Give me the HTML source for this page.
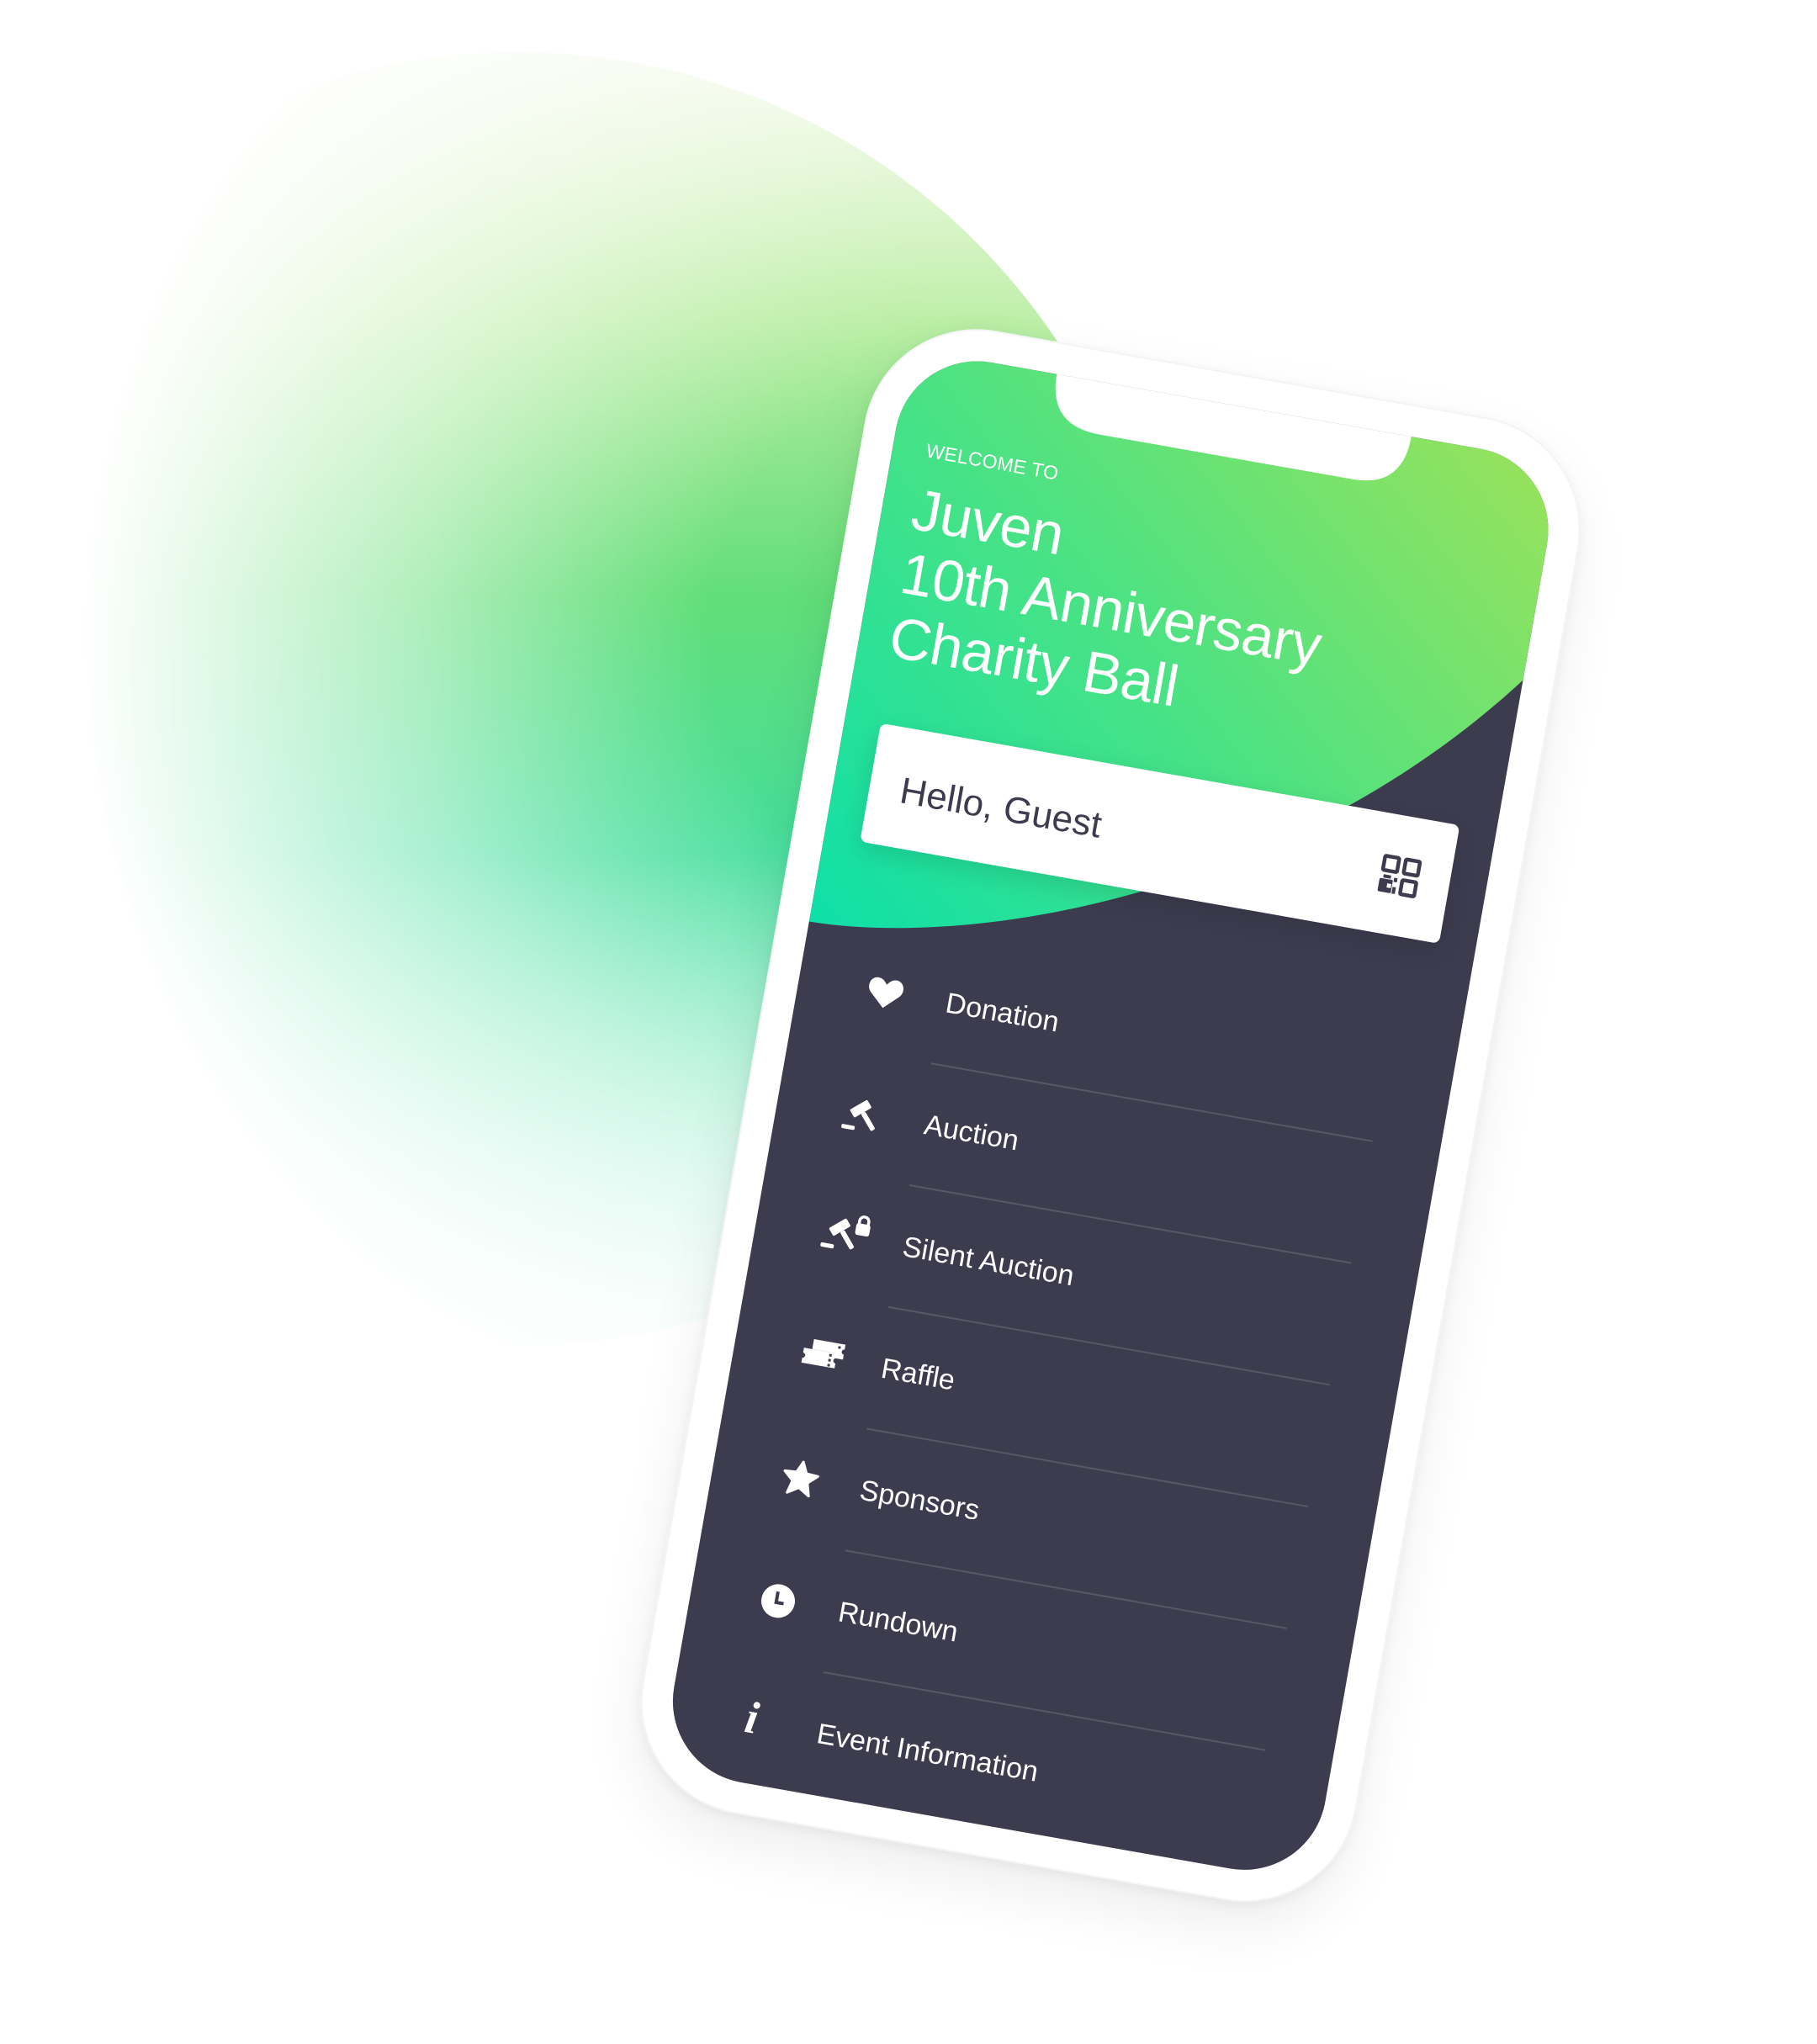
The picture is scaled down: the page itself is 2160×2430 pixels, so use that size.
<!DOCTYPE html>
<html><head><meta charset="utf-8">
<style>
html,body{margin:0;padding:0;background:#fff;}
body{width:2160px;height:2430px;overflow:hidden;position:relative;font-family:"Liberation Sans",sans-serif;}
.blob{position:absolute;left:-153px;top:62px;width:1538px;height:1538px;border-radius:50%;
background:
radial-gradient(circle at 85% 45%, rgba(255,255,255,0) 0%, rgba(255,255,255,0) 20%, rgba(255,255,255,0.5) 42%, #fff 68%),
linear-gradient(180deg,#eef8de 0%,#b8eda0 20%,#62de78 42%,#45de9c 62%,#b0f2da 85%,#e8fbf4 100%);}
.phone{position:absolute;left:1082px;top:414px;width:786px;height:1714px;transform-origin:0 0;transform:rotate(10deg);}
.frame{position:absolute;left:-38px;top:-38px;width:862px;height:1790px;border-radius:135px;background:#fff;
box-shadow:0 30px 70px rgba(0,0,0,0.07),0 4px 14px rgba(0,0,0,0.05), inset 0 0 0 2px #f4f4f4;}
.screen{position:absolute;left:0;top:0;width:786px;height:1714px;border-radius:98px;overflow:hidden;background:#3d3c4f;}
.screen svg.bg{position:absolute;left:0;top:0;}
.t{position:absolute;color:#fff;white-space:nowrap;}
.welcome{left:40px;top:102px;font-size:23px;line-height:28px;letter-spacing:0.3px;}
.title{left:36px;top:149px;font-size:69px;line-height:77px;letter-spacing:-0.5px;}
.card{position:absolute;left:43px;top:445px;width:699px;height:143px;background:#fff;border-radius:8px;box-shadow:0 10px 30px rgba(0,0,0,0.12);}
.hello{position:absolute;left:37px;top:50px;font-size:44px;line-height:50px;color:#3d3b4e;}
.qr{position:absolute;left:615px;top:48px;}
.item{position:absolute;left:177px;font-size:34px;line-height:40px;color:#fff;}
.div{position:absolute;left:172px;width:533px;height:2px;background:rgba(255,255,255,0.14);}
.ic{position:absolute;}
</style></head><body>
<div class="blob"></div>
<div class="phone">
  <div class="frame"></div>
  <div class="screen">
    <svg class="bg" width="786" height="1714" viewBox="0 0 786 1714">
      <defs>
        <linearGradient id="g" x1="0" y1="1" x2="1" y2="0">
          <stop offset="0" stop-color="#0ee0a8"/>
          <stop offset="0.5" stop-color="#4ce283"/>
          <stop offset="1" stop-color="#9ae25a"/>
        </linearGradient>
      </defs>
      <path d="M0,0 H786 V262 C560,560 200,690 0,692 Z" fill="url(#g)"/>
      <path d="M172,-10 L177,0 Q177,62 240,62 L545,62 Q605,62 605,0 L610,-10 Z" fill="#fff"/>
    </svg>
    <div class="t welcome">WELCOME TO</div>
    <div class="t title">Juven<br>10th Anniversary<br>Charity Ball</div>
    <div class="card">
      <div class="hello">Hello, Guest</div>
      <svg class="qr" width="48" height="48" viewBox="0 0 48 48">
        <g fill="none" stroke="#3d3b4e" stroke-width="4.5">
          <rect x="3" y="3" width="17" height="17" rx="1.5"/>
          <rect x="28" y="3" width="17" height="17" rx="1.5"/>
          <rect x="28" y="28" width="17" height="17" rx="1.5"/>
        </g>
        <g fill="#3d3b4e">
          <rect x="1" y="30" width="16" height="16" rx="1.5"/>
          <rect x="5" y="25" width="9" height="4"/>
          <rect x="18" y="27" width="4" height="5"/>
          <rect x="18" y="38" width="4" height="8"/>
        </g>
        <rect x="11" y="35" width="5" height="5" fill="#fff"/>
      </svg>
    </div>

    <svg class="ic" style="left:82px;top:740px" width="44" height="40" viewBox="0 0 44 40"><path d="M22 38 L5 22 C-2 15 2 3 11 3 C16 3 19 6 22 10 C25 6 28 3 33 3 C42 3 46 15 39 22 Z" fill="#fff"/></svg>
    <div class="item" style="top:739px">Donation</div>
    <div class="div" style="top:832px"></div>

    <svg class="ic" style="left:78px;top:886px" width="46" height="46" viewBox="0 0 46 46"><g fill="#fff"><g transform="rotate(-40 24 18)"><rect x="12" y="8" width="24" height="11" rx="1.5"/><rect x="21" y="19" width="6" height="24" rx="2"/></g><rect x="2" y="36" width="16" height="5" rx="2"/></g></svg>
    <div class="item" style="top:886px">Auction</div>
    <div class="div" style="top:979px"></div>

    <svg class="ic" style="left:78px;top:1025px" width="66" height="50" viewBox="0 0 66 50"><g fill="#fff"><g transform="rotate(-40 24 22)"><rect x="12" y="12" width="24" height="11" rx="1.5"/><rect x="21" y="23" width="6" height="24" rx="2"/></g><rect x="2" y="40" width="16" height="5" rx="2"/><rect x="40" y="10" width="17" height="14" rx="3"/><path d="M43 11 V7 A5.5 5.5 0 0 1 54 7 V11" fill="none" stroke="#fff" stroke-width="3.5"/></g></svg>
    <div class="item" style="top:1033px">Silent Auction</div>
    <div class="div" style="top:1126px"></div>

    <svg class="ic" style="left:80px;top:1178px" width="54" height="42" viewBox="0 0 54 42"><g fill="#fff"><path d="M12 2 H50 V8 A3 3 0 0 0 50 14 V20 H40 V14 H12 Z"/><path d="M2 14 H42 V20 A3 3 0 0 0 42 26 V32 H2 V26 A3 3 0 0 0 2 20 Z"/></g><g fill="#3d3c4f"><rect x="33" y="16" width="3" height="3"/><rect x="33" y="22" width="3" height="3"/><rect x="33" y="28" width="3" height="3"/><rect x="42" y="5" width="3" height="3"/></g></svg>
    <div class="item" style="top:1180px">Raffle</div>
    <div class="div" style="top:1273px"></div>

    <svg class="ic" style="left:82px;top:1324px" width="46" height="44" viewBox="0 0 46 44"><path d="M23 2 L29 15 L43 16 L32 26 L36 41 L23 33 L10 41 L14 26 L3 16 L17 15 Z" fill="#fff" stroke="#fff" stroke-width="3" stroke-linejoin="round"/></svg>
    <div class="item" style="top:1327px">Sponsors</div>
    <div class="div" style="top:1420px"></div>

    <svg class="ic" style="left:82px;top:1472px" width="44" height="44" viewBox="0 0 44 44"><circle cx="22" cy="22" r="20" fill="#fff"/><path d="M20 11 V24 H29" fill="none" stroke="#3d3c4f" stroke-width="4"/></svg>
    <div class="item" style="top:1474px">Rundown</div>
    <div class="div" style="top:1567px"></div>

    <div class="t" style="left:90px;top:1606px;font-family:'Liberation Serif',serif;font-style:italic;font-weight:bold;font-size:54px;line-height:60px;">i</div>
    <div class="item" style="top:1621px">Event Information</div>
  </div>
</div>
</body></html>
